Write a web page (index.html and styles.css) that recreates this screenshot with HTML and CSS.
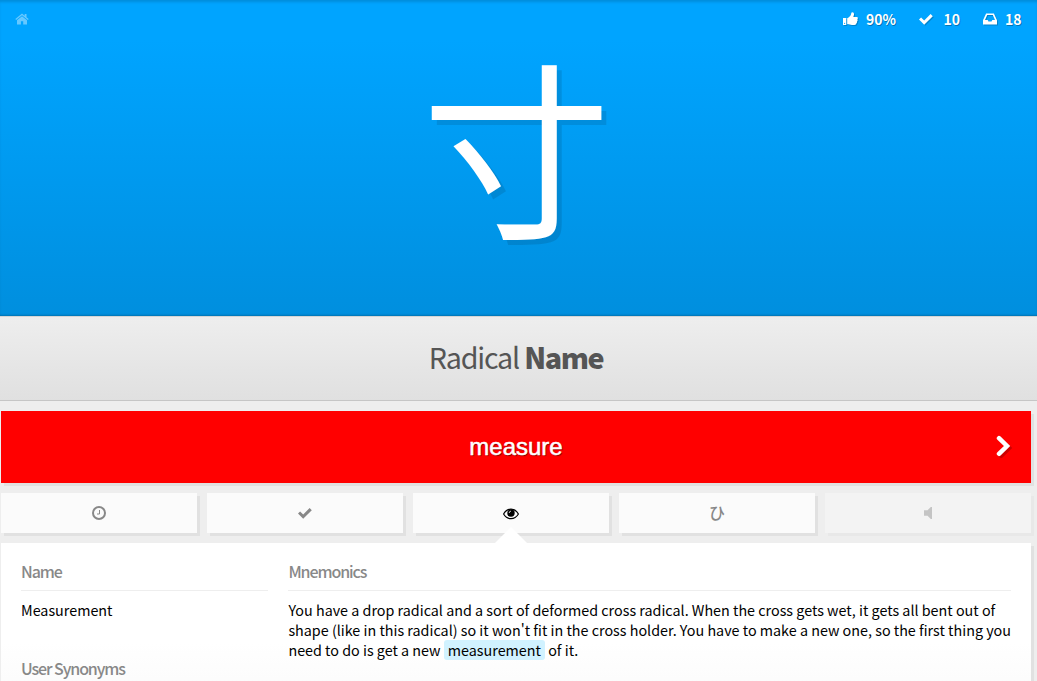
FILE: index.html
```
<!DOCTYPE html>
<html lang="ja">
<head>
  <meta charset="UTF-8" />
  <meta name="viewport" content="width=device-width, initial-scale=1.0"/>
  <title>Reviews</title>
  <link rel="stylesheet" href="styles.css">
</head>
<body>
  <header class="question">
    <div class="topbar">
      <a href="#" class="home">
        <svg width="14" height="12" viewBox="0 0 14 12"><path d="M7 3.2 2 7.3V11.5h3.9V8.2h2.3v3.3H12V7.3zM7 .6.3 6.1l.8.9L7 2.2 12.9 7l.8-.9-2.2-1.8V1h-1.8v1.8z"/></svg>
      </a>
      <div class="stats">
        <span class="stat">
          <svg width="15" height="14" viewBox="0 0 15 14"><path d="M0 6h3.3v7H0zM4.200 6.200c1.600-.5 2.300-1.800 3.500-3C8.300 2.300 8.100.300 9.200.3c1.600 0 2.100 1.500 1.700 2.800L10.300 5h3.200c1.400 0 1.800 1.400.8 2.200.6.8.4 1.700-.3 2.100.3.8 0 1.500-.6 1.800.1 1.300-.8 1.900-2 1.900H9c-1.700 0-3-.8-4.800-.9z"/><circle class="dot" cx="1.600" cy="11.300" r=".6"/></svg>
          <span class="num rate">90%</span>
        </span>
        <span class="stat done">
          <svg width="14" height="11" viewBox="0 0 14 11"><path d="M0 5.500 2.100 3.400 5.200 6.500 11.600.1l2.200 2.100-8.600 8.600z"/></svg>
          <span class="num">10</span>
        </span>
        <span class="stat left">
          <svg width="14" height="12" viewBox="0 0 14 12"><path fill-rule="evenodd" d="M3.100.4h7.800L14 7.200v4.300H0V7.200zM4.200 1.900 2 7h2.700l.8 1.600h3L9.300 7H12L9.800 1.900z"/></svg>
          <span class="num">18</span>
        </span>
      </div>
    </div>
    <div class="character">寸</div>
  </header>

  <div class="question-type">Radical <strong>Name</strong></div>

  <main class="reviews">
    <div class="answer">
      <span class="answer-text">measure</span>
      <svg class="next" width="15" height="22" viewBox="0 0 15 22"><path d="M3 3.200 11 11 3 18.800"/></svg>
    </div>

    <div class="tabs">
      <div class="tab">
        <svg width="14" height="14" viewBox="0 0 14 14"><circle cx="7" cy="7" r="6" fill="none" stroke="currentColor" stroke-width="2"/><path d="M7.500 4v4H5" fill="none" stroke="currentColor"/></svg>
      </div>
      <div class="tab">
        <svg width="14" height="11" viewBox="0 0 14 11"><path d="M0 5.500 2.100 3.400 5.200 6.500 11.600.1l2.200 2.100-8.600 8.600z"/></svg>
      </div>
      <div class="tab active">
        <svg width="16" height="12" viewBox="0 0 16 12"><path d="M.6 6C4.300-.6 11.700-.6 15.400 6 11.700 12.200 4.300 12.200.6 6z" fill="none" stroke="currentColor" stroke-width="1.200"/><circle cx="8" cy="5" r="3.700"/><path d="M6.200 5A1.900 1.900 0 0 1 8 3.100" fill="none" stroke="#fbfbfb" stroke-width=".8"/></svg>
      </div>
      <div class="tab kana">ひ</div>
      <div class="tab disabled">
        <svg width="8" height="12" viewBox="0 0 8 12"><path d="M0 3.300h3.500L6.800 0H8v12H6.800L3.500 8.800H0z"/></svg>
      </div>
    </div>

    <div class="info">
      <section class="col-name">
        <h2>Name</h2>
        <p>Measurement</p>
        <h2 class="synonyms">User Synonyms</h2>
      </section>
      <section class="col-mnemonics">
        <h2>Mnemonics</h2>
        <p>You have a drop radical and a sort of deformed cross radical. When the cross gets wet, it gets all bent out of<br>
        shape (like in this radical) so it won't fit in the cross holder. You have to make a new one, so the first thing you<br>
        need to do is get a new <span class="highlight">measurement</span> of it.</p>
      </section>
    </div>
  </main>
</body>
</html>
```

FILE: styles.css
```
* {
  box-sizing: border-box;
}

body {
  margin: 0;
  height: 681px;
  overflow: hidden;
  background-color: #eee;
  color: #000;
  font-family: "Noto Sans CJK JP", sans-serif;
  font-size: 14.34px;
  line-height: 20px;
}

svg {
  display: block;
  fill: currentColor;
}

.question {
  height: 316px;
  background: linear-gradient(to bottom, #00a4ff 0, #00a4ff 40px, #0090e0 300px, #008fde 100%);
  box-shadow: inset 0 3px 3px -1px rgba(0, 0, 0, 0.15), inset 0 -3px 2px -2px rgba(0, 0, 0, 0.2);
  color: #fff;
}

.topbar {
  display: flex;
  justify-content: space-between;
  align-items: center;
  height: 38px;
  padding: 0 15.5px 0 15px;
}

.home {
  color: #66c8ff;
}

.stats {
  display: flex;
  gap: 23.5px;
  font-size: 14px;
  font-weight: 700;
  text-shadow: 1px 1px 0 rgba(0, 0, 0, 0.3);
}

.stat {
  display: flex;
  align-items: center;
  gap: 7.5px;
}

.stat.done {
  gap: 10px;
}

.stat svg {
  filter: drop-shadow(1px 1px 0 rgba(0, 0, 0, 0.2));
}

.dot {
  fill: #00a4ff;
}

.character {
  height: 230px;
  padding-right: 4px;
  font-size: 189px;
  line-height: 208px;
  text-align: center;
  text-shadow: 5px 5px 0 rgba(0, 0, 0, 0.1);
}

.question-type {
  height: 85px;
  padding-right: 5px;
  border-top: 1px solid #d5d5d5;
  border-bottom: 1px solid #c6c6c6;
  background: linear-gradient(to bottom, #eee, #e0e0e0);
  color: #555;
  font-size: 28.7px;
  font-weight: 400;
  letter-spacing: -1.2px;
  line-height: 79px;
  text-align: center;
}

.question-type strong {
  font-weight: 900;
  letter-spacing: -1.4px;
}

.reviews {
  padding: 10px 6px 0 1px;
}

.answer {
  display: flex;
  align-items: center;
  height: 72px;
  padding-right: 20px;
  background-color: #f00;
  box-shadow: 3px 3px 0 #e1e1e1;
  color: #fff;
}

.answer-text {
  flex: 1;
  padding-left: 35px;
  font-family: "Liberation Sans", sans-serif;
  font-size: 24px;
  text-align: center;
  text-shadow: 1px 1px 1px rgba(0, 0, 0, 0.5);
  -webkit-text-stroke: 0.5px #fff;
}

.next {
  margin-bottom: 2px;
  fill: none;
  stroke: #fff;
  stroke-width: 4.5;
  stroke-linecap: round;
  filter: drop-shadow(2px 2px 0 rgba(0, 0, 0, 0.2));
}

.tabs {
  display: flex;
  gap: 10px;
  margin-top: 10px;
}

.tab {
  display: flex;
  justify-content: center;
  align-items: center;
  width: 196px;
  height: 40px;
  background-color: #fbfbfb;
  box-shadow: 3px 3px 0 #e1e1e1;
  color: #888;
}

.tab.active {
  position: relative;
  padding-top: 1px;
  color: #000;
}

.tab.active::after {
  content: "";
  position: absolute;
  left: 82px;
  top: 34px;
  border: 16px solid transparent;
  border-top: 0;
  border-bottom-color: #fff;
}

.tab.disabled {
  width: 206px;
  opacity: 0.4;
}

.kana {
  padding-bottom: 2px;
  font-size: 16px;
  font-weight: 500;
}

.info {
  display: flex;
  gap: 20px;
  height: 160px;
  margin-top: 10px;
  padding: 16px 20px 0;
  background: linear-gradient(to bottom, #fff 100px, #fafafa);
  box-shadow: 3px 3px 0 #e1e1e1;
}

.col-name {
  flex: 0 0 247.4px;
}

.col-mnemonics {
  flex: 1;
  min-width: 0;
  white-space: nowrap;
}

.info h2 {
  height: 32px;
  margin: 0 0 9px;
  border-bottom: 1px solid #eee;
  color: #888;
  font-size: 16px;
  font-weight: 500;
  letter-spacing: -1.1px;
  line-height: 24px;
}

.info p {
  margin: 0;
}

.info .synonyms {
  margin-top: 36px;
}

.highlight {
  display: inline-block;
  height: 20px;
  padding: 0 4px;
  border-radius: 3px;
  background-color: #d1f2ff;
  vertical-align: top;
}
```
